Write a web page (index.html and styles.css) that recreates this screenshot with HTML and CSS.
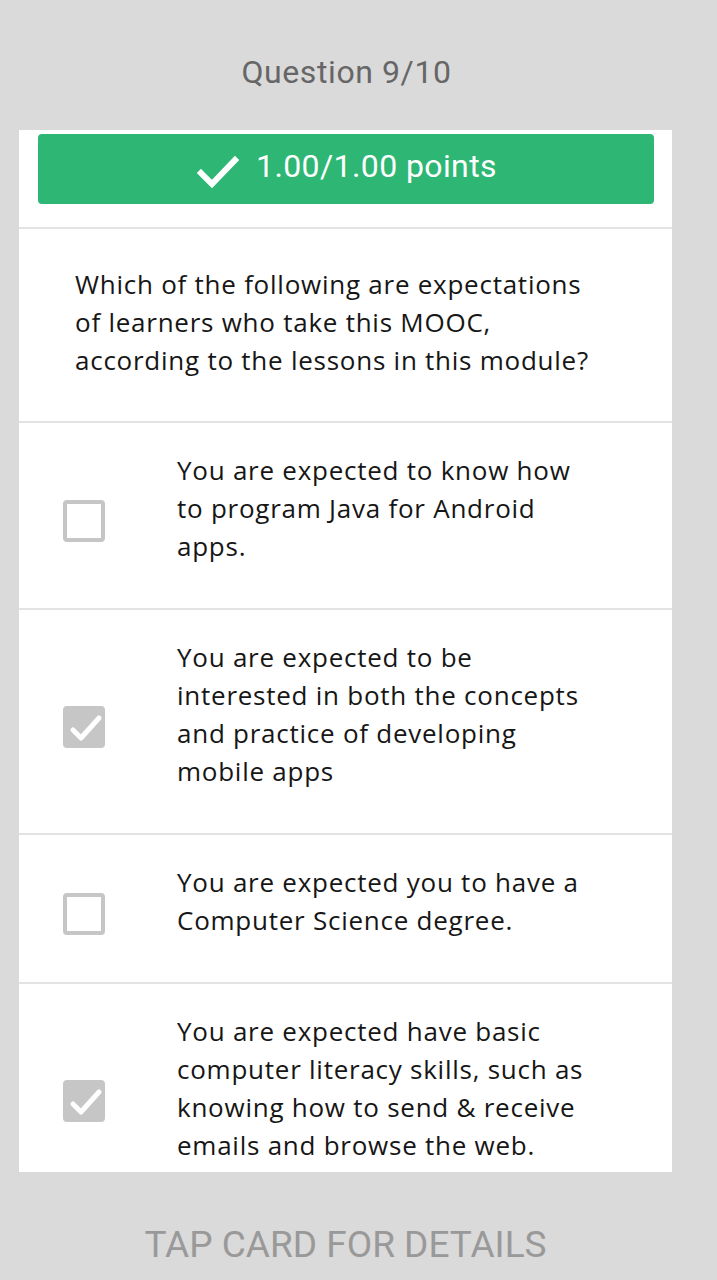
FILE: index.html
```html
<!DOCTYPE html>
<html>
<head>
<meta charset="utf-8">
<link rel="stylesheet" href="styles.css">
</head>
<body>
<div class="screen">
  <div class="title">Question 9/10</div>
  <div class="card">
    <div class="banner-wrap">
      <div class="banner">
        <svg class="tick" width="42" height="34" viewBox="0 0 42 34"><path d="M4 18 L15 29 L38 5" fill="none" stroke="#fff" stroke-width="6" stroke-linecap="square" stroke-linejoin="miter"/></svg>
        <span>1.00/1.00 points</span>
      </div>
    </div>
    <div class="question">Which of the following are expectations of learners who take this MOOC, according to the lessons in this module?</div>
    <div class="option">
      <div class="box"></div>
      <div class="opt-text">You are expected to know how to program Java for Android apps.</div>
    </div>
    <div class="option">
      <div class="box checked"><svg width="42" height="42" viewBox="0 0 42 42"><path d="M10 24 L18 32 L36 12" fill="none" stroke="#fff" stroke-width="5" stroke-linecap="round" stroke-linejoin="round"/></svg></div>
      <div class="opt-text">You are expected to be interested in both the concepts and practice of developing mobile apps</div>
    </div>
    <div class="option">
      <div class="box"></div>
      <div class="opt-text">You are expected you to have a Computer Science degree.</div>
    </div>
    <div class="option">
      <div class="box checked"><svg width="42" height="42" viewBox="0 0 42 42"><path d="M10 24 L18 32 L36 12" fill="none" stroke="#fff" stroke-width="5" stroke-linecap="round" stroke-linejoin="round"/></svg></div>
      <div class="opt-text">You are expected have basic computer literacy skills, such as knowing how to send &amp; receive emails and browse the web.</div>
    </div>
  </div>
  <div class="footer">TAP CARD FOR DETAILS</div>
</div>
</body>
</html>
```
FILE: styles.css
```css
html, body {
  margin: 0;
  padding: 0;
  background: #dadada;
}
.screen {
  width: 717px;
  height: 1280px;
  overflow: hidden;
  display: flex;
  flex-direction: column;
}
.title {
  font-family: Roboto, "Liberation Sans", sans-serif;
  font-size: 32px;
  letter-spacing: 0.6px;
  color: #666;
  text-align: center;
  line-height: 40px;
  padding-top: 52px;
  height: 78px;
  box-sizing: content-box;
  margin-left: -24px;
}
.card {
  margin-left: 19px;
  width: 653px;
  height: 1042px;
  background: #fff;
  overflow: hidden;
  flex-shrink: 0;
}
.banner-wrap {
  padding: 4px 18px 23px 19px;
  border-bottom: 2px solid #e3e3e3;
}
.banner {
  height: 70px;
  background: #2db674;
  border-radius: 4px;
  display: flex;
  align-items: center;
  justify-content: center;
  gap: 17px;
  color: #fff;
  font-family: Roboto, "Liberation Sans", sans-serif;
  font-size: 32px;
  letter-spacing: 0.4px;
  padding-left: 2px;
}
.banner span {
  margin-top: -6px;
}
.tick {
  margin-top: 6px;
}
.question {
  font-family: "Open Sans", "Liberation Sans", sans-serif;
  font-size: 26px;
  letter-spacing: 0.75px;
  line-height: 38px;
  color: #161616;
  padding: 36px 72px 42px 56px;
  border-bottom: 2px solid #e3e3e3;
}
.option {
  display: flex;
  border-bottom: 2px solid #e3e3e3;
}
.box {
  width: 42px;
  height: 42px;
  box-sizing: border-box;
  border: 4px solid #c6c6c6;
  border-radius: 4px;
  margin-left: 44px;
  margin-right: 72px;
  align-self: center;
  margin-top: 11px;
  flex-shrink: 0;
  position: relative;
}
.box.checked {
  background: #c6c6c6;
}
.box svg {
  position: absolute;
  left: -4px;
  top: -4px;
}
.opt-text {
  font-family: "Open Sans", "Liberation Sans", sans-serif;
  font-size: 26px;
  letter-spacing: 0.75px;
  line-height: 38px;
  color: #161616;
  padding: 28px 0 43px 0;
  width: 420px;
}
.footer {
  font-family: Roboto, "Liberation Sans", sans-serif;
  font-size: 37px;
  color: #999;
  text-align: center;
  margin-left: -26px;
  padding-top: 52px;
  line-height: 42px;
}
```
